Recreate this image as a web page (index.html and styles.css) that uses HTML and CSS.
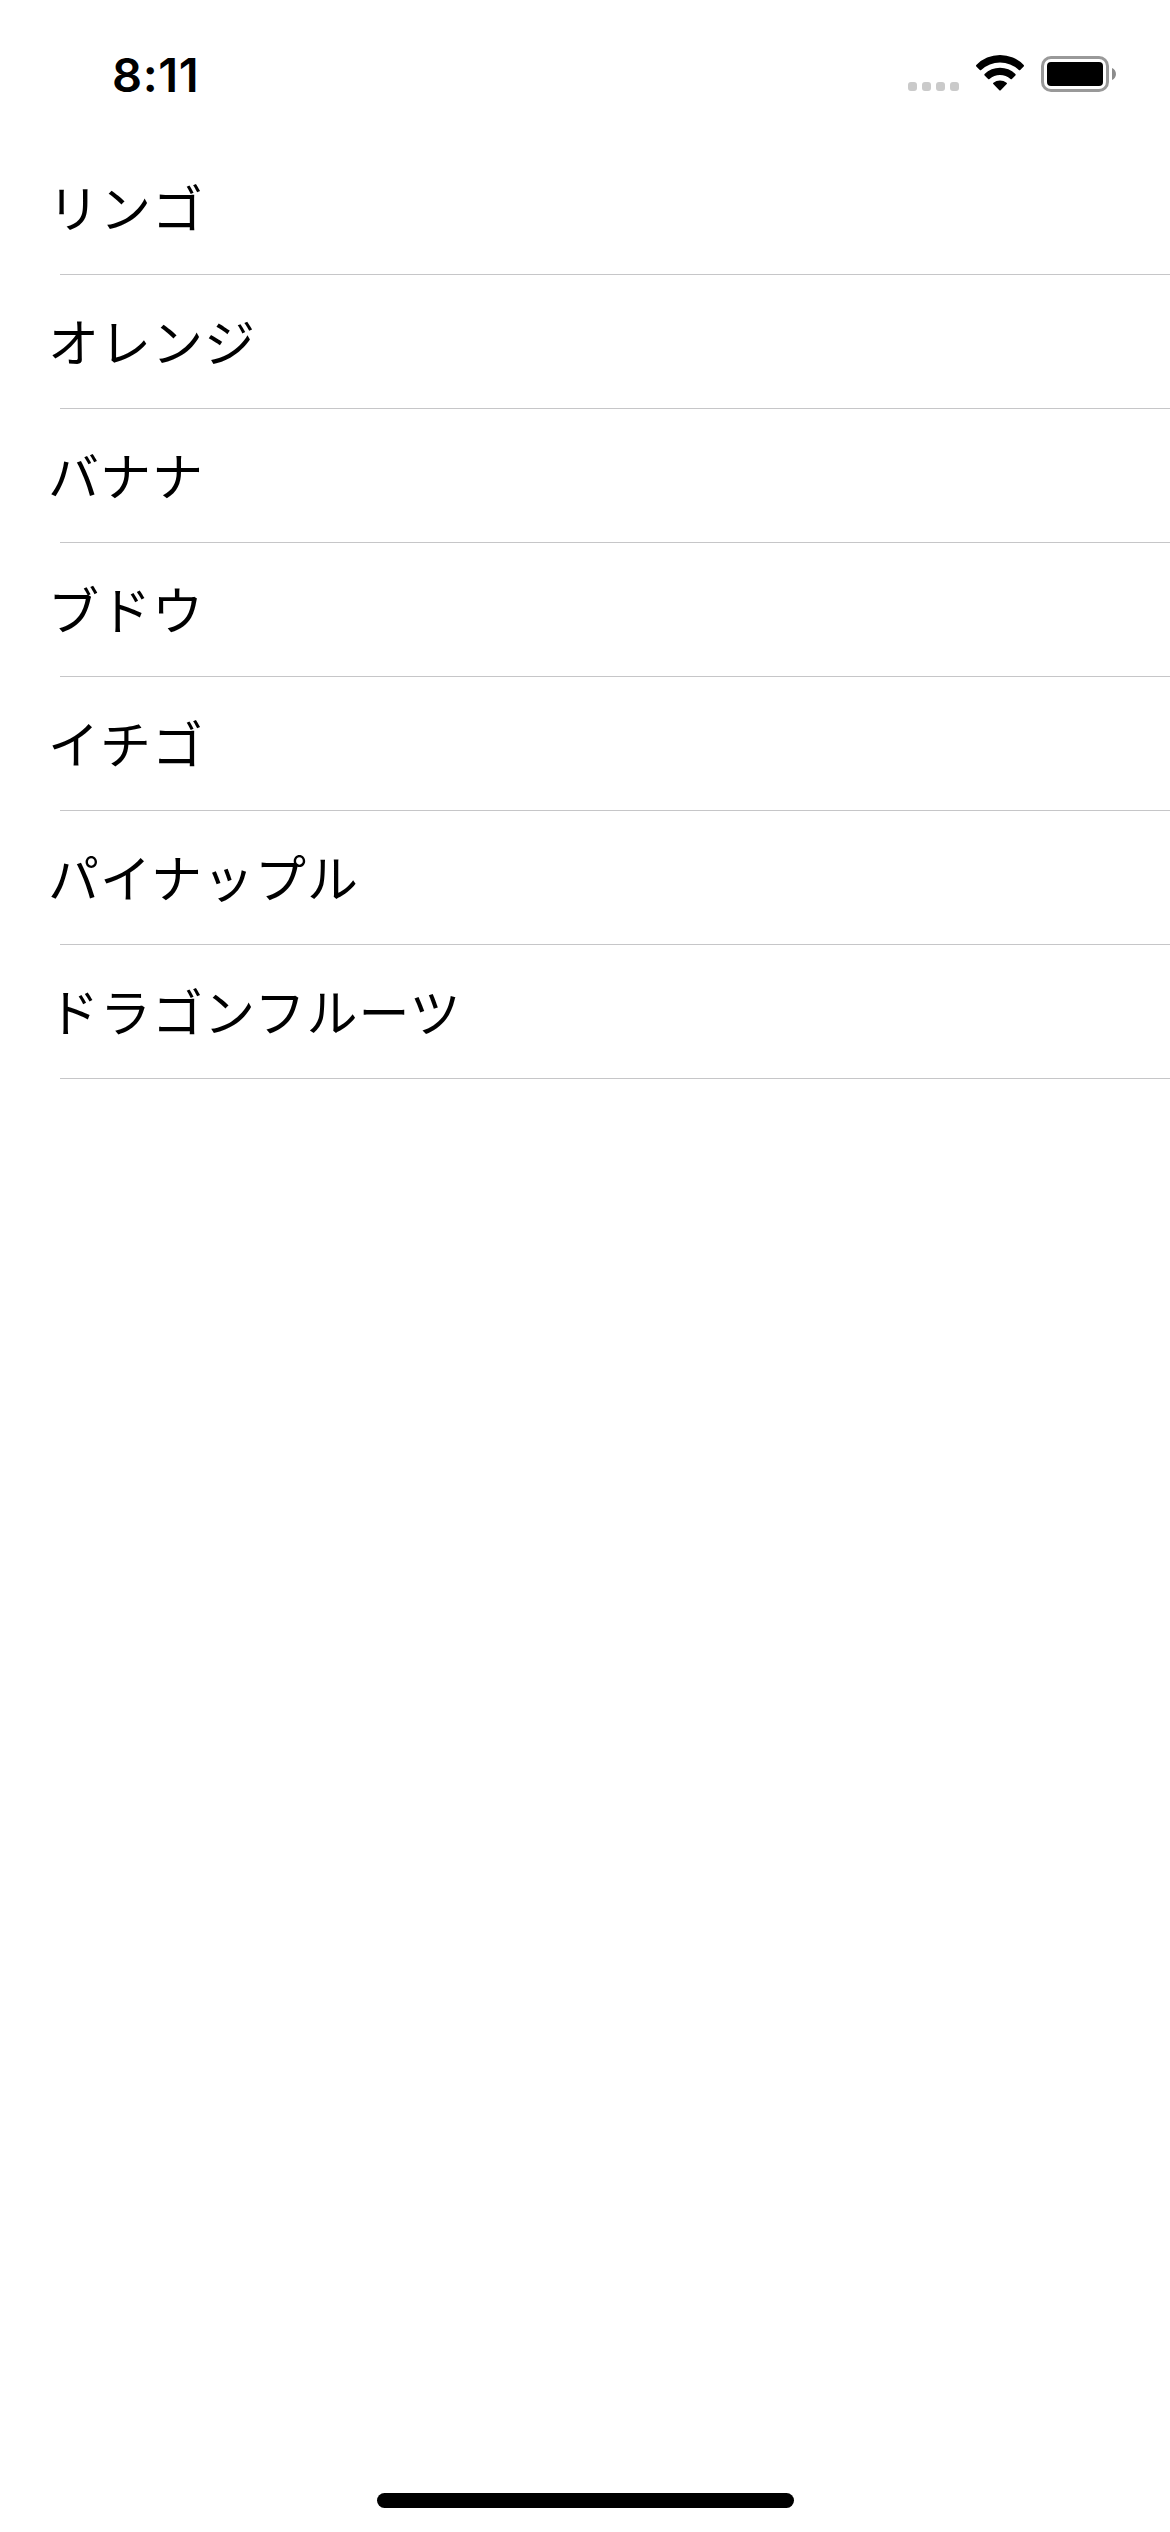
FILE: index.html
```html
<!DOCTYPE html>
<html lang="ja">
<head>
  <meta charset="UTF-8">
  <title>フルーツ</title>
  <link rel="stylesheet" href="styles.css">
</head>
<body>
  <div class="screen">
    <header class="status-bar">
      <div class="time">8:11</div>
      <div class="status-icons">
        <div class="signal">
          <span></span><span></span><span></span><span></span>
        </div>
        <svg class="wifi" width="50" height="38" viewBox="0 0 50 38">
          <path d="M1.3 11 A33 33 0 0 1 48.7 11 Q49.4 11.8 48.7 12.5 L45.2 16 Q44.5 16.6 43.8 16 A27.5 27.5 0 0 0 6.2 16 Q5.5 16.6 4.8 16 L1.3 12.5 Q0.6 11.8 1.3 11 Z"/>
          <path d="M9.6 20 A22 22 0 0 1 40.4 20 Q41.1 20.8 40.4 21.5 L36.9 25 Q36.2 25.6 35.5 25 A16 16 0 0 0 14.5 25 Q13.8 25.6 13.1 25 L9.6 21.5 Q8.9 20.8 9.6 20 Z"/>
          <path d="M18.4 28.7 A11 11 0 0 1 31.6 28.7 Q32.4 29.4 31.7 30.1 L25.7 36.2 Q25 36.9 24.3 36.2 L18.3 30.1 Q17.6 29.4 18.4 28.7 Z"/>
        </svg>
        <svg class="battery" width="75" height="36" viewBox="0 0 75 36">
          <rect class="battery-case" x="1.5" y="1.5" width="65" height="33" rx="8.5"/>
          <rect x="6" y="6" width="56" height="24" rx="4"/>
          <path class="battery-cap" d="M71 12 C76.3 14 76.3 22 71 24 Z"/>
        </svg>
      </div>
    </header>

    <ul class="list">
      <li class="row">リンゴ</li>
      <li class="row">オレンジ</li>
      <li class="row">バナナ</li>
      <li class="row">ブドウ</li>
      <li class="row">イチゴ</li>
      <li class="row">パイナップル</li>
      <li class="row">ドラゴンフルーツ</li>
    </ul>

    <div class="home-indicator"></div>
  </div>
</body>
</html>
```

FILE: styles.css
```css
body {
  margin: 0;
  background-color: #fff;
  color: #000;
}
.screen {
  display: flex;
  flex-direction: column;
  align-items: stretch;
  box-sizing: border-box;
  width: 1170px;
  height: 2532px;
  padding-bottom: 24px;
}
.status-bar {
  display: flex;
  justify-content: space-between;
  box-sizing: border-box;
  height: 141px;
  padding: 54px 54px 0 112px;
}
.time {
  font-family: Inter, "Liberation Sans", sans-serif;
  font-size: 47px;
  font-weight: 600;
  line-height: 41px;
  letter-spacing: 0.6px;
}
.status-icons {
  display: flex;
  align-items: flex-start;
}
.signal {
  display: flex;
  gap: 5px;
  margin: 28px 16px 0 0;
}
.signal span {
  width: 9px;
  height: 9px;
  border-radius: 3px;
  background-color: #cacaca;
}
.wifi {
  margin-right: 16px;
}
.battery {
  margin-top: 2px;
}
.battery-case {
  fill: none;
  stroke: #999;
  stroke-width: 3;
}
.battery-cap {
  fill: #8c8c8c;
}
.list {
  flex: 1;
  margin: 0;
  padding: 0 0 0 60px;
  list-style: none;
}
.row {
  box-sizing: border-box;
  height: 134px;
  border-bottom: 1px solid #c6c6c8;
  font-family: "Noto Sans CJK JP", sans-serif;
  font-size: 51px;
  font-weight: 400;
  line-height: 130px;
  letter-spacing: 1px;
  text-indent: -12px;
}
.home-indicator {
  align-self: center;
  width: 417px;
  height: 15px;
  border-radius: 8px;
  background-color: #000;
}
```
